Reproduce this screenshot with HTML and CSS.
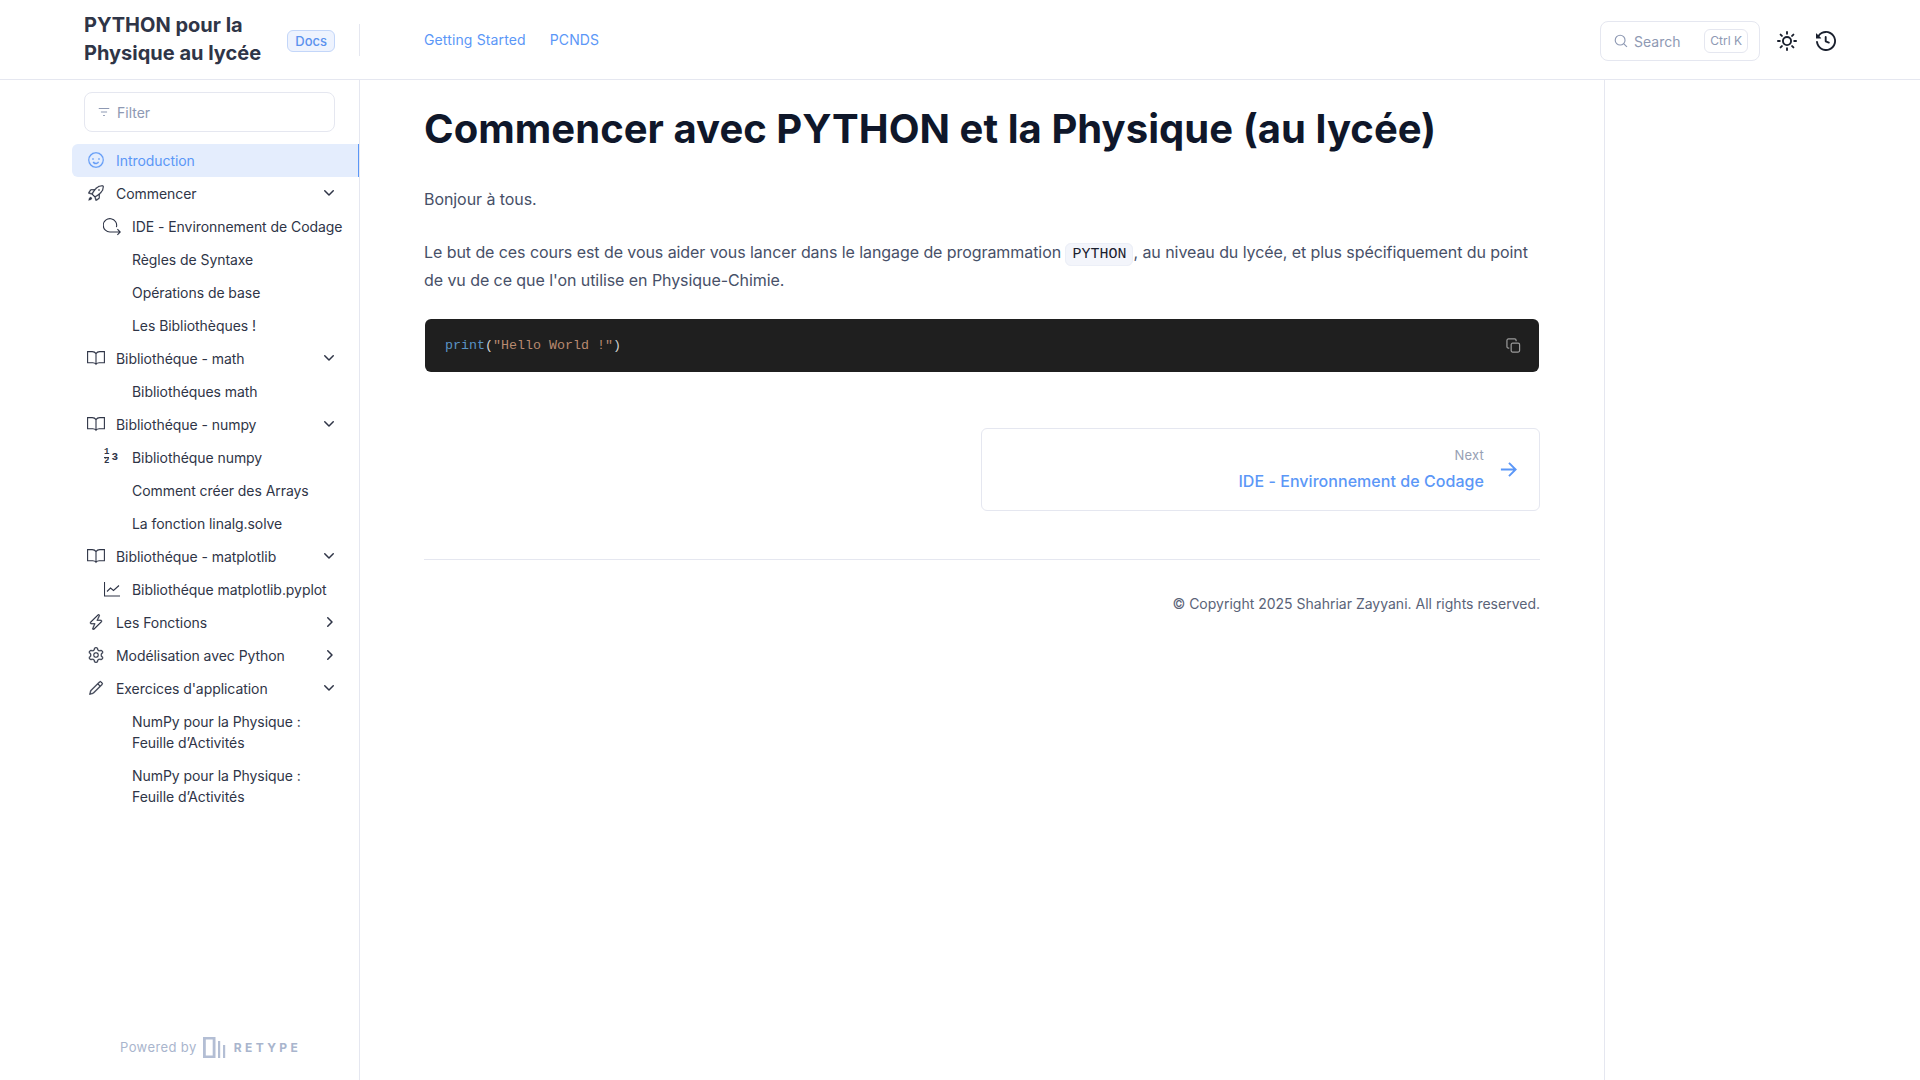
FILE: index.html
```html
<!DOCTYPE html>
<html lang="fr">
<head>
    <meta charset="UTF-8">
    <meta name="viewport" content="width=device-width, initial-scale=1.0">
    <title>Commencer avec PYTHON et la Physique (au lycée)</title>
    <link rel="stylesheet" href="styles.css">
</head>
<body>

    <!-- Icons used more than once -->
    <svg class="sprites" width="0" height="0">
        <symbol id="i-book" viewBox="0 0 18 18"><path d="M9 4.6C8.2 3.3 6.8 2.6 5.2 2.6H.6v11.2h5.2c1.4 0 2.4.4 3.2 1.5.8-1.1 1.8-1.5 3.2-1.5h5.2V2.6h-4.6C11.2 2.6 9.8 3.3 9 4.6ZM9 4.6v10.7"/></symbol>
        <symbol id="i-down" viewBox="0 0 16 16"><path d="M12.78 5.22a.749.749 0 0 1 0 1.06l-4.25 4.25a.749.749 0 0 1-1.06 0L3.22 6.28a.749.749 0 1 1 1.06-1.06L8 8.939l3.72-3.719a.749.749 0 0 1 1.06 0Z"/></symbol>
        <symbol id="i-right" viewBox="0 0 16 16"><path d="M6.22 3.22a.75.75 0 0 1 1.06 0l4.25 4.25a.75.75 0 0 1 0 1.06l-4.25 4.25a.751.751 0 0 1-1.042-.018.751.751 0 0 1-.018-1.042L9.94 8 6.22 4.28a.75.75 0 0 1 0-1.06Z"/></symbol>
    </svg>

    <header class="topbar">
        <div class="brand">
            <a class="brand-title">PYTHON pour la Physique au lycée</a>
            <span class="brand-badge">Docs</span>
        </div>
        <nav class="topnav">
            <a>Getting Started</a>
            <a>PCNDS</a>
        </nav>
        <div class="tools">
            <div class="search">
                <svg class="search-icon" viewBox="0 0 16 16"><circle cx="7" cy="7" r="5.6"/><path d="M11 11l3.8 3.8"/></svg>
                <span class="search-text">Search</span>
                <span class="search-key">Ctrl K</span>
            </div>
            <svg class="tool-icon" viewBox="0 0 16 16"><path d="M8 12a4 4 0 1 1 0-8 4 4 0 0 1 0 8Zm0-1.5a2.5 2.5 0 1 0 0-5 2.5 2.5 0 0 0 0 5Zm5.657-8.157a.75.75 0 0 1 0 1.061l-1.061 1.06a.749.749 0 0 1-1.275-.326.749.749 0 0 1 .215-.734l1.06-1.06a.75.75 0 0 1 1.06 0Zm-9.193 9.193a.75.75 0 0 1 0 1.06l-1.06 1.061a.75.75 0 1 1-1.061-1.06l1.06-1.061a.75.75 0 0 1 1.061 0ZM8 0a.75.75 0 0 1 .75.75v1.5a.75.75 0 0 1-1.5 0V.75A.75.75 0 0 1 8 0ZM3 8a.75.75 0 0 1-.75.75H.75a.75.75 0 0 1 0-1.5h1.5A.75.75 0 0 1 3 8Zm13 0a.75.75 0 0 1-.75.75h-1.5a.75.75 0 0 1 0-1.5h1.5A.75.75 0 0 1 16 8Zm-8 5a.75.75 0 0 1 .75.75v1.5a.75.75 0 0 1-1.5 0v-1.5A.75.75 0 0 1 8 13Zm3.536-1.464a.75.75 0 0 1 1.06 0l1.061 1.06a.75.75 0 0 1-1.06 1.061l-1.061-1.06a.75.75 0 0 1 0-1.061ZM2.343 2.343a.75.75 0 0 1 1.061 0l1.06 1.061a.751.751 0 0 1-.018 1.042.751.751 0 0 1-1.042.018l-1.06-1.06a.75.75 0 0 1 0-1.061Z"/></svg>
            <svg class="tool-icon" viewBox="0 0 16 16"><path d="M1.643 3.143 .427 1.927A.25.25 0 0 0 0 2.104V5.75c0 .138.112.25.25.25h3.646a.25.25 0 0 0 .177-.427L2.715 4.215a6.5 6.5 0 1 1-1.18 4.458.75.75 0 1 0-1.493.154 8.001 8.001 0 1 0 1.6-5.684ZM7.75 4a.75.75 0 0 1 .75.75v2.992l2.028.812a.75.75 0 0 1-.557 1.392l-2.5-1A.751.751 0 0 1 7 8.25v-3.5A.75.75 0 0 1 7.75 4Z"/></svg>
        </div>
    </header>

    <div class="layout">
        <aside class="sidebar">
            <div class="filter">
                <svg class="filter-icon" viewBox="0 0 16 16"><path d="M2 4h12M4.5 8h7M7 12h2"/></svg>
                <span>Filter</span>
            </div>

            <ul class="tree">
                <li class="row active">
                    <svg class="row-icon" viewBox="0 0 16 16"><path d="M8 0a8 8 0 1 1 0 16A8 8 0 0 1 8 0ZM1.5 8a6.5 6.5 0 1 0 13 0 6.5 6.5 0 0 0-13 0Zm3.82 1.636a.75.75 0 0 1 1.038.175l.007.009c.103.118.22.222.35.31.264.178.683.37 1.285.37.602 0 1.02-.192 1.285-.371.13-.088.247-.192.35-.31l.007-.008a.75.75 0 0 1 1.222.87c-.16.216-.34.42-.55.6-.16.166-.338.316-.53.445-.63.418-1.37.638-2.127.629-.946 0-1.652-.308-2.126-.63a3.331 3.331 0 0 1-.715-.657l-.014-.02a.75.75 0 0 1 .183-1.044ZM12 7a1 1 0 1 1-2 0 1 1 0 0 1 2 0ZM5 8a1 1 0 1 1 0-2 1 1 0 0 1 0 2Z"/></svg>
                    <span class="row-label">Introduction</span>
                </li>
                <li class="row">
                    <svg class="row-icon" viewBox="0 0 16 16"><path d="M14.064 0h.186C15.216 0 16 .784 16 1.75v.186a8.752 8.752 0 0 1-2.564 6.186l-.458.459c-.314.314-.641.616-.979.904v3.207c0 .608-.315 1.172-.833 1.49l-2.774 1.707a.749.749 0 0 1-1.11-.418l-.954-3.102a1.214 1.214 0 0 1-.145-.125L3.754 9.816a1.218 1.218 0 0 1-.124-.145L.528 8.717a.749.749 0 0 1-.418-1.11l1.71-2.774A1.748 1.748 0 0 1 3.31 4h3.204c.288-.338.59-.665.904-.979l.459-.458A8.749 8.749 0 0 1 14.064 0ZM8.938 3.623h-.002l-.458.458c-.76.76-1.437 1.598-2.02 2.5l-1.5 2.317 2.143 2.143 2.317-1.5c.902-.583 1.74-1.26 2.499-2.02l.459-.458a7.25 7.25 0 0 0 2.123-5.127V1.75a.25.25 0 0 0-.25-.25h-.186a7.249 7.249 0 0 0-5.125 2.123ZM3.56 14.56c-.732.732-2.334 1.045-3.005 1.148a.234.234 0 0 1-.201-.064.234.234 0 0 1-.064-.201c.103-.671.416-2.273 1.15-3.003a1.502 1.502 0 1 1 2.12 2.12Zm6.94-3.935c-.088.06-.177.118-.266.175l-2.35 1.521.548 1.783 1.949-1.2a.25.25 0 0 0 .119-.213ZM3.678 8.116 5.2 5.766c.058-.09.117-.178.176-.266H3.309a.25.25 0 0 0-.213.119l-1.2 1.95ZM12 5a1 1 0 1 1-2 0 1 1 0 0 1 2 0Z"/></svg>
                    <span class="row-label">Commencer</span>
                    <svg class="chevron"><use href="#i-down"/></svg>
                </li>
                <li class="row sub">
                    <svg class="row-icon line ide" viewBox="0 0 18 18"><path d="M13.4 9.2A6.7 6.7 0 1 0 7.6 14H17M14.4 11.2l2.8 2.8-2.8 2.8"/></svg>
                    <span class="row-label">IDE - Environnement de Codage</span>
                </li>
                <li class="row sub"><span class="row-label">Règles de Syntaxe</span></li>
                <li class="row sub"><span class="row-label">Opérations de base</span></li>
                <li class="row sub"><span class="row-label">Les Bibliothèques !</span></li>
                <li class="row">
                    <svg class="row-icon line wide"><use href="#i-book"/></svg>
                    <span class="row-label">Bibliothéque - math</span>
                    <svg class="chevron"><use href="#i-down"/></svg>
                </li>
                <li class="row sub"><span class="row-label">Bibliothéques math</span></li>
                <li class="row">
                    <svg class="row-icon line wide"><use href="#i-book"/></svg>
                    <span class="row-label">Bibliothéque - numpy</span>
                    <svg class="chevron"><use href="#i-down"/></svg>
                </li>
                <li class="row sub">
                    <span class="row-icon numbers"><span class="frac"><span>1</span><span>2</span></span><span class="whole">3</span></span>
                    <span class="row-label">Bibliothéque numpy</span>
                </li>
                <li class="row sub"><span class="row-label">Comment créer des Arrays</span></li>
                <li class="row sub"><span class="row-label">La fonction linalg.solve</span></li>
                <li class="row">
                    <svg class="row-icon line wide"><use href="#i-book"/></svg>
                    <span class="row-label">Bibliothéque - matplotlib</span>
                    <svg class="chevron"><use href="#i-down"/></svg>
                </li>
                <li class="row sub">
                    <svg class="row-icon line" viewBox="0 0 16 16"><path d="M.5 1v14h15.5M3 10.5l3.5-3.5 3 2.5 5.5-5"/></svg>
                    <span class="row-label">Bibliothéque matplotlib.pyplot</span>
                </li>
                <li class="row">
                    <svg class="row-icon" viewBox="0 0 16 16"><path d="M9.504.43a1.516 1.516 0 0 1 2.437 1.713L10.415 5.5h2.123c1.57 0 2.346 1.909 1.22 3.004l-7.34 7.142a1.249 1.249 0 0 1-.871.354h-.302a1.25 1.25 0 0 1-1.157-1.723L5.633 10.5H3.462c-1.57 0-2.346-1.909-1.22-3.004L9.503.429Zm1.047 1.074L3.286 8.571A.25.25 0 0 0 3.462 9H6.75a.75.75 0 0 1 .694 1.034l-1.713 4.188 6.982-6.793A.25.25 0 0 0 12.538 7H9.25a.75.75 0 0 1-.683-1.06l2.008-4.418.003-.006a.036.036 0 0 0-.004-.009l-.006-.006-.008-.001c-.003 0-.006.002-.009.004Z"/></svg>
                    <span class="row-label">Les Fonctions</span>
                    <svg class="chevron"><use href="#i-right"/></svg>
                </li>
                <li class="row">
                    <svg class="row-icon" viewBox="0 0 16 16"><path d="M8 0a8.2 8.2 0 0 1 .701.031C9.444.095 9.99.645 10.16 1.29l.288 1.107c.018.066.079.158.212.224.231.114.454.243.668.386.123.082.233.09.299.071l1.103-.303c.644-.176 1.392.021 1.82.63.27.385.506.792.704 1.218.315.675.111 1.422-.364 1.891l-.814.806c-.049.048-.098.147-.088.294.016.257.016.515 0 .772-.01.147.038.246.088.294l.814.806c.475.469.679 1.216.364 1.891a7.977 7.977 0 0 1-.704 1.217c-.428.61-1.176.807-1.82.63l-1.102-.302c-.067-.019-.177-.011-.3.071a5.909 5.909 0 0 1-.668.386c-.133.066-.194.158-.211.224l-.29 1.106c-.168.646-.715 1.196-1.458 1.26a8.006 8.006 0 0 1-1.402 0c-.743-.064-1.289-.614-1.458-1.26l-.289-1.106c-.018-.066-.079-.158-.212-.224a5.738 5.738 0 0 1-.668-.386c-.123-.082-.233-.09-.299-.071l-1.103.303c-.644.176-1.392-.021-1.82-.63a8.12 8.12 0 0 1-.704-1.218c-.315-.675-.111-1.422.363-1.891l.815-.806c.05-.048.098-.147.088-.294a6.214 6.214 0 0 1 0-.772c.01-.147-.038-.246-.088-.294l-.815-.806C.635 6.045.431 5.298.746 4.623a7.92 7.92 0 0 1 .704-1.217c.428-.61 1.176-.807 1.82-.63l1.102.302c.067.019.177.011.3-.071.214-.143.437-.272.668-.386.133-.066.194-.158.211-.224l.29-1.106C6.009.645 6.556.095 7.299.03 7.53.01 7.764 0 8 0Zm-.571 1.525c-.036.003-.108.036-.137.146l-.289 1.105c-.147.561-.549.967-.998 1.189-.173.086-.34.183-.5.29-.417.278-.97.423-1.529.27l-1.103-.303c-.109-.03-.175.016-.195.045-.22.312-.412.644-.573.99-.014.031-.021.11.059.19l.815.806c.411.406.562.957.53 1.456a4.709 4.709 0 0 0 0 .582c.032.499-.119 1.05-.53 1.456l-.815.806c-.081.08-.073.159-.059.19.162.346.353.677.573.989.02.03.085.076.195.046l1.102-.303c.56-.153 1.113-.008 1.53.27.161.107.328.204.501.29.447.222.85.629.997 1.189l.289 1.105c.029.109.101.143.137.146a6.6 6.6 0 0 0 1.142 0c.036-.003.108-.036.137-.146l.289-1.105c.147-.561.549-.967.998-1.189.173-.086.34-.183.5-.29.417-.278.97-.423 1.529-.27l1.103.303c.109.029.175-.016.195-.045.22-.313.411-.644.573-.99.014-.031.021-.11-.059-.19l-.815-.806c-.411-.406-.562-.957-.53-1.456a4.709 4.709 0 0 0 0-.582c-.032-.499.119-1.05.53-1.456l.815-.806c.081-.08.073-.159.059-.19a6.464 6.464 0 0 0-.573-.989c-.02-.03-.085-.076-.195-.046l-1.102.303c-.56.153-1.113.008-1.53-.27a4.44 4.44 0 0 0-.501-.29c-.447-.222-.85-.629-.997-1.189l-.289-1.105c-.029-.11-.101-.143-.137-.146a6.6 6.6 0 0 0-1.142 0ZM11 8a3 3 0 1 1-6 0 3 3 0 0 1 6 0ZM9.5 8a1.5 1.5 0 1 0-3.001.001A1.5 1.5 0 0 0 9.5 8Z"/></svg>
                    <span class="row-label">Modélisation avec Python</span>
                    <svg class="chevron"><use href="#i-right"/></svg>
                </li>
                <li class="row">
                    <svg class="row-icon" viewBox="0 0 16 16"><path d="M11.013 1.427a1.75 1.75 0 0 1 2.474 0l1.086 1.086a1.75 1.75 0 0 1 0 2.474l-8.61 8.61c-.21.21-.47.364-.756.445l-3.251.93a.75.75 0 0 1-.927-.928l.929-3.25c.081-.286.235-.547.445-.758l8.61-8.61Zm.176 4.823L9.75 4.81l-6.286 6.287a.253.253 0 0 0-.064.108l-.558 1.953 1.953-.558a.253.253 0 0 0 .108-.064Zm1.238-3.763a.25.25 0 0 0-.354 0L10.811 3.75l1.439 1.44 1.263-1.263a.25.25 0 0 0 0-.354Z"/></svg>
                    <span class="row-label">Exercices d'application</span>
                    <svg class="chevron"><use href="#i-down"/></svg>
                </li>
                <li class="row sub"><span class="row-label">NumPy pour la Physique :<br>Feuille d’Activités</span></li>
                <li class="row sub"><span class="row-label">NumPy pour la Physique :<br>Feuille d’Activités</span></li>
            </ul>

            <div class="powered">
                <span>Powered by</span>
                <svg class="retype-mark" viewBox="0 0 23 21"><path d="M0 0h12.5v21H0zM2.8 2.6v15.8h6.9V2.6z" fill-rule="evenodd"/><path d="M15 4h2.2v17H15zM20 8h2.2v13H20z"/></svg>
                <span class="retype-name">RETYPE</span>
            </div>
        </aside>

        <main class="content">
            <h1>Commencer avec PYTHON et la Physique (au lycée)</h1>
            <p>Bonjour à tous.</p>
            <p>Le but de ces cours est de vous aider vous lancer dans le langage de programmation <code>PYTHON</code>, au niveau du lycée, et plus spécifiquement du point de vu de ce que l'on utilise en Physique-Chimie.</p>

            <div class="codeblock">
                <pre><span class="code-fn">print</span>(<span class="code-str">"Hello World !"</span>)</pre>
                <svg class="copy-icon" viewBox="0 0 16 16"><rect x="5.5" y="5.5" width="9" height="9.5" rx="1.6"/><path d="M3.5 10.8H2.6A1.6 1.6 0 0 1 1 9.2V2.6A1.6 1.6 0 0 1 2.6 1h6.6a1.6 1.6 0 0 1 1.6 1.6v.9"/></svg>
            </div>

            <div class="pager">
                <a class="next-card">
                    <span class="next-text">
                        <span class="next-label">Next</span>
                        <span class="next-title">IDE - Environnement de Codage</span>
                    </span>
                    <svg class="next-arrow" viewBox="0 0 20 20"><path d="M2 10h15M10.5 3l7 7-7 7"/></svg>
                </a>
            </div>

            <footer class="copyright">© Copyright 2025 Shahriar Zayyani. All rights reserved.</footer>
        </main>

        <div class="aside-right"></div>
    </div>

</body>
</html>
```

FILE: styles.css
```css
body {
    margin: 0;
    height: 1080px;
    overflow: hidden;
    background-color: white;
    font-family: Inter, "Noto Sans", sans-serif;
    color: #475068;
    display: flex;
    flex-direction: column;
}

.sprites {
    position: absolute;
}

/* Top bar */
.topbar {
    height: 79px;
    flex-shrink: 0;
    display: flex;
    align-items: center;
    border-bottom: 1px solid #e5e7f0;
}

.brand {
    box-sizing: border-box;
    width: 360px;
    height: 32px;
    padding: 0 24px 0 84px;
    display: flex;
    align-items: center;
    justify-content: space-between;
    border-right: 1px solid #e5e7f0;
}

.brand-title {
    width: 190px;
    margin-top: -1px;
    font-size: 20px;
    font-weight: 700;
    line-height: 28px;
    color: #2f3547;
}

.brand-badge {
    margin-top: 3px;
    padding: 2px 7px;
    font-size: 13px;
    font-weight: 500;
    line-height: 16px;
    color: #5b92ee;
    background-color: #eef3fe;
    border: 1px solid #c3d6f9;
    border-radius: 6px;
}

.topnav {
    margin-left: 64px;
    display: flex;
    gap: 24px;
    font-size: 14px;
    letter-spacing: 0.13px;
    color: #5b97f7;
}

.tools {
    margin-left: auto;
    margin-right: 84px;
    padding-top: 3px;
    display: flex;
    align-items: center;
}

.search {
    box-sizing: border-box;
    width: 160px;
    height: 40px;
    margin-right: 17px;
    padding: 0 11px 0 13px;
    display: flex;
    align-items: center;
    border: 1px solid #e5e7f0;
    border-radius: 8px;
    font-size: 14px;
    color: #8e99b3;
}

.search-icon {
    width: 14px;
    height: 14px;
    margin-right: 6px;
    fill: none;
    stroke: #8e99b3;
    stroke-width: 1.3;
}

.search-key {
    margin-left: auto;
    padding: 0 5px;
    font-size: 12px;
    line-height: 22px;
    border: 1px solid #e5e7f0;
    border-radius: 6px;
}

.tool-icon {
    width: 20px;
    height: 20px;
    fill: #1a202e;
}

.tool-icon:last-child {
    margin-left: 19px;
}

/* Page columns */
.layout {
    flex: 1;
    min-height: 0;
    display: grid;
    grid-template-columns: 360px 1245px 1fr;
}

/* Sidebar */
.sidebar {
    box-sizing: border-box;
    padding: 12px 0 0 72px;
    display: flex;
    flex-direction: column;
    border-right: 1px solid #e5e7f0;
}

.filter {
    box-sizing: border-box;
    width: 251px;
    height: 40px;
    margin: 0 0 12px 12px;
    padding: 0 12px;
    display: flex;
    align-items: center;
    gap: 6px;
    font-size: 14px;
    color: #8e99b3;
    border: 1px solid #e5e7f0;
    border-radius: 8px;
}

.filter-icon {
    width: 14px;
    height: 14px;
    fill: none;
    stroke: #8e99b3;
    stroke-width: 1.2;
}

.tree {
    list-style: none;
    margin: 0;
    padding: 0;
    font-size: 14px;
    line-height: 21px;
    letter-spacing: -0.06px;
    color: #2f3547;
}

.row {
    padding: 6px 22px 6px 44px;
    position: relative;
    display: flex;
    align-items: flex-start;
}

.row.sub {
    padding-left: 60px;
    padding-right: 0;
}

.row.active {
    color: #5b97f7;
    background-color: #e4edfd;
    border-right: 1px solid #5b97f7;
    border-radius: 6px 0 0 6px;
    padding-right: 21px;
}

.row-label {
    flex: 1;
}

/* the white stroke thins the filled icons down to the weight of the reference */
.row-icon {
    position: absolute;
    left: 16px;
    top: 8px;
    width: 16px;
    height: 16px;
    fill: #2f3547;
    stroke: white;
    stroke-width: 0.35;
}

.row.active .row-icon {
    fill: #5b97f7;
    stroke: #e4edfd;
}

.row.sub .row-icon {
    left: 32px;
}

.row-icon.line {
    fill: none;
    stroke: #2f3547;
    stroke-width: 1.1;
}

.row-icon.wide {
    left: 15px;
    top: 7px;
    width: 18px;
    height: 18px;
}

.row.sub .row-icon.ide {
    left: 31px;
    top: 8px;
    width: 18px;
    height: 18px;
}

.row-icon.numbers {
    left: 33px;
    top: 8px;
    display: flex;
    align-items: center;
    gap: 2px;
    font-family: "Liberation Mono", monospace;
    font-weight: 700;
    letter-spacing: 0;
    color: #2f3547;
}

.frac {
    display: flex;
    flex-direction: column;
    font-size: 9px;
    line-height: 7.5px;
}

.frac span:first-child {
    border-bottom: 1px solid #2f3547;
}

.whole {
    font-size: 11px;
    line-height: 11px;
}

.chevron {
    width: 16px;
    height: 16px;
    margin-top: 2px;
    fill: #2f3547;
}

.powered {
    margin-top: auto;
    height: 34px;
    margin-bottom: 16px;
    padding-left: 48px;
    display: flex;
    align-items: center;
    font-size: 13px;
    letter-spacing: 0.4px;
    color: #a9b5cd;
}

.retype-mark {
    width: 23px;
    height: 21px;
    margin-left: 6px;
    fill: #b3bed4;
}

.retype-name {
    margin-left: 8px;
    font-size: 12px;
    font-weight: 700;
    letter-spacing: 3.4px;
}

/* Main content */
.content {
    box-sizing: border-box;
    padding: 0 64px;
    font-size: 16px;
    line-height: 28px;
    border-right: 1px solid #e5e7f0;
}

h1 {
    margin: 27px 0 34px;
    font-size: 40px;
    font-weight: 700;
    line-height: 44px;
    letter-spacing: 0.05px;
    color: #0f172a;
}

p {
    margin: 0 0 25px;
    letter-spacing: -0.07px;
    color: #475068;
}

code {
    padding: 2px 6px;
    font-family: "Liberation Mono", monospace;
    font-size: 15px;
    line-height: 1;
    letter-spacing: 0;
    color: #1a202e;
    background-color: #f3f5fb;
    border: 1px solid #eceff7;
    border-radius: 6px;
}

.codeblock {
    width: 1114px;
    height: 53px;
    margin-left: 1px;
    display: flex;
    align-items: center;
    justify-content: space-between;
    background-color: #1f1f1f;
    border-radius: 6px;
}

.codeblock pre {
    margin: 0;
    padding-left: 20px;
    font-family: "Liberation Mono", monospace;
    font-size: 13.33px;
    color: #cfcfcf;
}

.code-fn {
    color: #5a93c5;
}

.code-str {
    color: #b98a70;
}

.copy-icon {
    width: 15px;
    height: 15px;
    margin-right: 18px;
    fill: none;
    stroke: #9a9a9a;
    stroke-width: 1.3;
}

.pager {
    margin-top: 56px;
    display: flex;
    justify-content: flex-end;
}

.next-card {
    box-sizing: border-box;
    width: 559px;
    height: 83px;
    padding: 0 21px 0 22px;
    display: flex;
    align-items: center;
    justify-content: flex-end;
    gap: 15px;
    border: 1px solid #e5e7f0;
    border-radius: 6px;
}

.next-text {
    margin-bottom: 3px;
    display: flex;
    flex-direction: column;
    align-items: flex-end;
}

.next-label {
    font-size: 13px;
    line-height: 25px;
    letter-spacing: 0.2px;
    color: #97a0b4;
}

.next-title {
    font-size: 16px;
    font-weight: 500;
    line-height: 26px;
    letter-spacing: 0.05px;
    color: #5b97f7;
}

.next-arrow {
    width: 19px;
    height: 19px;
    fill: none;
    stroke: #5b97f7;
    stroke-width: 2;
}

.copyright {
    margin-top: 48px;
    padding-top: 30px;
    border-top: 1px solid #e5e7f0;
    text-align: right;
    font-size: 14px;
    line-height: 28px;
    color: #5a6378;
}
```
